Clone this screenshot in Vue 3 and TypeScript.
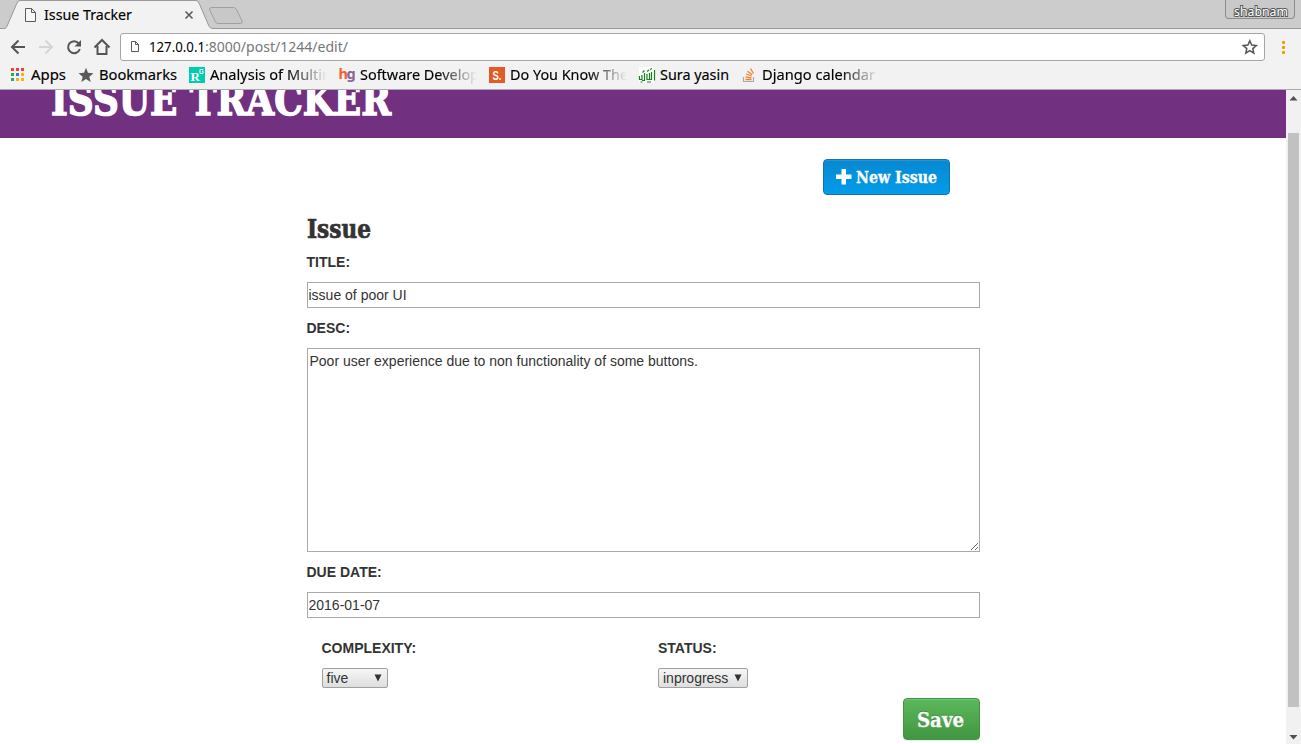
<script setup lang="ts">
import { ref } from 'vue'

interface Bookmark {
  label: string
  icon: 'apps' | 'star' | 'rg' | 'hg' | 's' | 'sura' | 'so'
  width: number
  length: number
  fade: boolean
}

const bookmarks: Bookmark[] = [
  { label: 'Apps', icon: 'apps', width: 47, length: 35, fade: false },
  { label: 'Bookmarks', icon: 'star', width: 90, length: 78, fade: false },
  { label: 'Analysis of Multin', icon: 'rg', width: 129, length: 121, fade: true },
  { label: 'Software Develop', icon: 'hg', width: 129, length: 119, fade: true },
  { label: 'Do You Know The', icon: 's', width: 129, length: 118, fade: true },
  { label: 'Sura yasin', icon: 'sura', width: 81, length: 69, fade: false },
  { label: 'Django calendar', icon: 'so', width: 129, length: 113, fade: true },
]
const appColors = ['#ea4335', '#ea4335', '#ea4335', '#34a853', '#2a7de1', '#f4b400', '#34a853', '#f4b400', '#f4b400']

const title = ref('issue of poor UI')
const desc = ref('Poor user experience due to non functionality of some buttons.')
const due = ref('2016-01-07')
</script>

<template>
  <div class="browser">
    <div class="tabstrip">
      <svg class="tabs" width="260" height="29" viewBox="0 0 260 29">
        <path d="M0 28.500H3.500C6.500 28.500 6.500 27.500 7.500 25L17 3Q18 .5 20 .5H196Q198 .5 199 3L208.500 25C209.500 27.500 210.500 28.500 213 28.500H260V30H0Z" fill="#f2f2f2" />
        <path d="M0 28.500H3.500C6.500 28.500 6.500 27.500 7.500 25L17 3Q18 .5 20 .5H196Q198 .5 199 3L208.500 25C209.500 27.500 210.500 28.500 213 28.500H260" fill="none" stroke="#999" />
        <path d="M212 7.500H233.500Q235.500 7.500 236.500 9.500L242 21Q243 23.500 240.500 23.500H218Q216 23.500 215 21L209.500 9.500Q209 7.500 212 7.500Z" fill="#c8c8c8" stroke="#a0a0a0" />
        <path d="M25.500 8.500h6l4 4v9h-10zM31.500 8.500v4h4" fill="#f7f7f7" stroke="#5a5a5a" />
        <path d="m185.500 11.500 7 7m0-7-7 7" stroke="#5a5a5a" stroke-width="1.600" />
        <text x="44" y="20" class="ui" textLength="88" lengthAdjust="spacingAndGlyphs">Issue Tracker</text>
      </svg>
      <div class="profile">
        <svg width="68" height="18"><text x="8" y="15.500" class="profile-name" textLength="54" lengthAdjust="spacingAndGlyphs">shabnam</text></svg>
      </div>
    </div>

    <div class="toolbar">
      <svg class="nav" width="120" height="36" viewBox="0 29 120 36" fill="none" stroke="#555" stroke-width="2">
        <path d="M25 47H12.500M18.500 40.500 12 47l6.500 6.500" />
        <path d="M39 47h12.500M45.500 40.500 52 47l-6.500 6.500" stroke="#d5d5d5" />
        <path d="M78.700 43.300A6 6 0 1 0 79.800 49" />
        <path d="M81 40v6.500h-6.500z" fill="#555" stroke="none" />
        <path d="M94.500 47.500 102 40l7.500 7.500M97.500 46v8h9v-8" />
      </svg>
      <div class="omnibox">
        <svg width="1143" height="26" viewBox="121 34 1143 26">
          <path d="M131.500 41.500h4l3 3v7h-7zM135.500 41.500v3h3" fill="none" stroke="#5a5a5a" />
          <text x="149" y="52" class="url" textLength="56" lengthAdjust="spacingAndGlyphs">127.0.0.1</text>
          <text x="205" y="52" class="url path" textLength="143" lengthAdjust="spacingAndGlyphs">:8000/post/1244/edit/</text>
          <path d="m1249.800 40.800 1.900 4.300 4.600.4-3.500 3.100 1 4.500-4-2.400-4 2.400 1-4.500-3.500-3.100 4.600-.4z" fill="none" stroke="#555" stroke-width="1.500" />
        </svg>
      </div>
      <div class="menu"><i /><i /><i /></div>
    </div>

    <div class="bookmarks">
      <div v-for="b in bookmarks" :key="b.label" class="bookmark">
        <svg class="icon" width="16" height="16" viewBox="0 0 16 16">
          <template v-if="b.icon === 'apps'">
            <rect v-for="(c, i) in appColors" :key="i" :x="1 + (i % 3) * 5" :y="1 + Math.floor(i / 3) * 5" width="3" height="3" :fill="c" />
          </template>
          <path v-else-if="b.icon === 'star'" d="m8 .8 2 5 5.500.4-4.200 3.500 1.400 5.300L8 12l-4.700 3 1.400-5.300L.5 6.200 6 5.800z" fill="#5a5a5a" />
          <template v-else-if="b.icon === 'rg'">
            <rect width="16" height="16" fill="#00ccb0" />
            <text x="1.500" y="14" class="rg">R</text>
            <path d="M14 3.500v-1h-3v4h3v-2h-1" fill="none" stroke="#fff" />
          </template>
          <template v-else-if="b.icon === 'hg'">
            <text x="-.5" y="11.500" class="hg h">h</text>
            <text x="7.500" y="11.500" class="hg g">g</text>
          </template>
          <template v-else-if="b.icon === 's'">
            <rect width="16" height="16" fill="#e45a24" />
            <text x="3.500" y="13" class="s" textLength="9" lengthAdjust="spacingAndGlyphs">S.</text>
          </template>
          <template v-else-if="b.icon === 'sura'">
            <rect width="16" height="16" fill="#fff" />
            <path d="M.5 9v3.500H3V8M5.500 6v7.500H3M8 7v5.500h2.500V6M12.500 5v7.500h-2M15.500 3v10.500M1.500 15h2M3.500 5.500l2-2M8 4.500l2-1.500M11 2.500l2-1M8 15h4" fill="none" stroke="#16801d" stroke-width="1.200" />
          </template>
          <template v-else>
            <path d="M2.500 10v4.500h10V10" fill="none" stroke="#aaa" stroke-width="1.200" />
            <path d="M4.500 12.500h6M4.500 9.800l6 1M5 7l5.700 2M6.500 4.200l4.700 3.600M9.500 1.500l3 5" stroke="#f48024" stroke-width="1.300" />
          </template>
        </svg>
        <svg class="bm-text" :class="{ fade: b.fade }" :style="{ width: b.width + 'px' }" height="20">
          <text x="0" y="15" class="ui" :textLength="b.length" lengthAdjust="spacingAndGlyphs">{{ b.label }}</text>
        </svg>
      </div>
    </div>

    <div class="viewport">
      <div class="page">
        <header class="banner">
          <svg width="420" height="48"><text x="51" y="25" class="slab brand" textLength="340" lengthAdjust="spacingAndGlyphs">ISSUE TRACKER</text></svg>
        </header>
        <main class="content">
          <div class="actions">
            <button class="btn new">
              <svg width="125" height="34">
                <path d="M17.500 9h4.500v5.500h5.500v4.500h-5.500v5.500h-4.500v-5.500h-5.500v-4.500h5.500z" fill="#fff" />
                <text x="32" y="23" class="slab new-text" textLength="81" lengthAdjust="spacingAndGlyphs">New Issue</text>
              </svg>
            </button>
          </div>
          <h2><svg width="80" height="38"><text x="0" y="28" class="slab heading" textLength="64" lengthAdjust="spacingAndGlyphs">Issue</text></svg></h2>
          <label for="title">TITLE:</label>
          <input id="title" v-model="title" type="text">
          <label for="desc">DESC:</label>
          <textarea id="desc" v-model="desc" spellcheck="false" />
          <label for="due">DUE DATE:</label>
          <input id="due" v-model="due" type="text">
          <div class="choices">
            <div class="choice">
              <label>COMPLEXITY:</label>
              <div class="select five"><span>five</span><svg width="8" height="8"><path d="M.5 .5h7L4 7.500z" fill="#333" /></svg></div>
            </div>
            <div class="choice">
              <label>STATUS:</label>
              <div class="select progress"><span>inprogress</span><svg width="8" height="8"><path d="M.5 .5h7L4 7.500z" fill="#333" /></svg></div>
            </div>
          </div>
          <div class="submit">
            <button class="btn save">
              <svg width="75" height="40"><text x="13" y="28" class="slab save-text" textLength="47" lengthAdjust="spacingAndGlyphs">Save</text></svg>
            </button>
          </div>
        </main>
      </div>
      <div class="scrollbar">
        <svg width="15" height="16"><path d="M3.500 10.500h8L7.500 6z" fill="#505050" /></svg>
        <div class="thumb" />
        <svg width="15" height="16"><path d="M3.500 7h8l-4 4.500z" fill="#505050" /></svg>
      </div>
    </div>
  </div>
</template>

<style>
body { margin: 0; overflow: hidden; }
</style>

<style scoped>
* { box-sizing: border-box; }
svg { display: block; flex: none; }
.browser { width: 1301px; height: 744px; display: flex; flex-direction: column; overflow: hidden; background: #fff; font-family: "Liberation Sans", Arial, sans-serif; }
.tabstrip { height: 29px; flex: none; display: flex; justify-content: space-between; background: #ccc linear-gradient(#999, #999) bottom / 100% 1px no-repeat; }
.profile { width: 70px; height: 19px; margin-right: 6px; border: 1px solid #8d8d8d; border-top: 0; border-radius: 0 0 4px 4px; background: #c9c9c9; }
.profile-name { font: 13px "Noto Sans", sans-serif; fill: #fff; stroke: #555; stroke-width: 2px; paint-order: stroke; }
.ui { font: 14.500px "Noto Sans", sans-serif; fill: #000; stroke: #000; stroke-width: .15px; }
.url { font: 14px "Noto Sans", sans-serif; fill: #000; }
.url.path { fill: #777; }
.toolbar { height: 36px; flex: none; display: flex; align-items: flex-start; background: #f2f2f2; }
.omnibox { width: 1145px; height: 28px; margin-top: 4px; border: 1px solid #a6a6a6; border-radius: 3px; background: #fff; overflow: hidden; }
.menu { width: 4px; margin: 12px 0 0 17px; display: flex; flex-direction: column; gap: 2px; }
.menu i { width: 3px; height: 3px; border-radius: 1px; background: #f29900; }
.bookmarks { height: 25px; flex: none; display: flex; padding-left: 10px; background: #f2f2f2; border-bottom: 1px solid #aaa; }
.bookmark { display: flex; gap: 5px; height: 20px; }
.icon { margin-top: 2px; overflow: visible; }
.bm-text { overflow: hidden; }
.fade { -webkit-mask-image: linear-gradient(to right, #000 78px, transparent 117px); mask-image: linear-gradient(to right, #000 78px, transparent 117px); }
.rg { font: bold 13px "Liberation Serif", serif; fill: #fff; }
.hg { font: bold 14.500px "Noto Sans", sans-serif; }
.hg.h { fill: #f1602c; }
.hg.g { fill: #876795; }
.s { font: bold 12px "Liberation Sans", sans-serif; fill: #fff; }
.viewport { flex: 1; min-height: 0; display: flex; }
.page { width: 1286px; overflow: hidden; }
.banner { height: 48px; background: #723081; }
.slab { font-family: "DejaVu Serif", serif; font-weight: bold; fill: #fff; stroke: #fff; stroke-width: .3px; }
.brand { font-size: 43px; stroke-width: 1.500px; }
.content { width: 673px; margin-left: 306.500px; display: flex; flex-direction: column; }
.actions { display: flex; justify-content: flex-end; padding: 21px 30px 0 0; }
.btn { display: block; padding: 0; border-radius: 4px; }
.new { width: 127px; height: 36px; border: 1px solid #1571b0; background: linear-gradient(#0688d2, #049ce9); box-shadow: inset 0 1px 0 rgba(255, 255, 255, .12); }
.new-text { font-size: 16px; }
h2 { height: 57px; margin: 0; padding-top: 15px; }
.heading { font-size: 25.500px; fill: #333; stroke: #333; stroke-width: .7px; }
label { display: block; height: 30px; font-size: 14px; line-height: 20px; font-weight: bold; color: #333; }
input { width: 673px; height: 26px; margin: 0 0 10px; padding: 1px; border: 1px solid #a9a9a9; border-radius: 0; font: 14px "Liberation Sans", sans-serif; color: #333; background: #fff; outline: 0; }
textarea { width: 673px; height: 204px; margin: 0 0 10px; padding: 2px; border: 1px solid #a9a9a9; border-radius: 0; font: 14px/20px "Liberation Sans", sans-serif; color: #333; background: #fff; resize: both; outline: 0; }
.choices { display: flex; margin-top: 10px; padding-left: 15px; }
.choice { flex: none; width: 336.500px; }
.choice + .choice { width: 321px; }
.select { height: 20px; display: flex; align-items: center; justify-content: space-between; padding: 0 5px 0 4px; border: 1px solid #a0a0a0; border-radius: 2px; background: linear-gradient(#f6f6f6, #dedede); font-size: 14px; line-height: 18px; color: #333; }
.five { width: 66px; }
.progress { width: 90px; }
.submit { display: flex; justify-content: flex-end; margin-top: 10px; }
.save { width: 77px; height: 42px; border: 1px solid #419641; background: linear-gradient(#5cb85c, #419641); box-shadow: inset 0 1px 0 rgba(255, 255, 255, .15), 0 1px 1px rgba(0, 0, 0, .08); }
.save-text { font-size: 20px; text-shadow: 0 -1px 0 rgba(0, 0, 0, .2); }
.scrollbar { width: 15px; display: flex; flex-direction: column; background: #f1f1f1; }
.thumb { width: 11px; height: 574px; margin: 27px 2px 21px; flex: none; background: #c1c1c1; }
</style>
